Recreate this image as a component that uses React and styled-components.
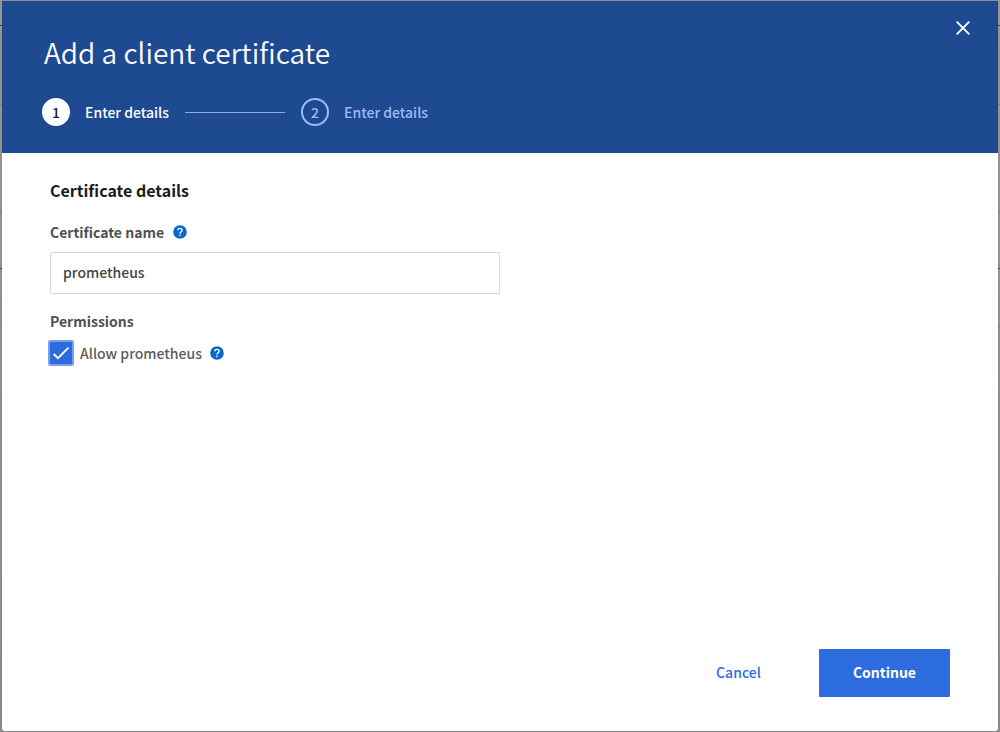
import React from "react";
import styled, { createGlobalStyle } from "styled-components";

const GlobalStyle = createGlobalStyle`
  *, *::before, *::after { box-sizing: border-box; }
  body {
    margin: 0;
    background: #999;
    color: #505050;
    font-family: "Source Sans Pro", "Noto Sans CJK SC", "Noto Sans", sans-serif;
    font-size: 14px;
    line-height: 20px;
  }
  button, input { font: inherit; }
`;

const Screen = styled.div`
  display: grid;
  min-height: 100vh;
  background: linear-gradient(#9d9c98, #8f8f8f);
`;

const Underlay = styled.div`
  grid-area: 1 / 1;
`;

const UnderlayRow = styled.div`
  height: ${(p) => p.$height}px;
  border-bottom: 1px solid ${(p) => (p.$strong ? "#484848" : "#808080")};
`;

const Dialog = styled.section`
  grid-area: 1 / 1;
  z-index: 1;
  display: flex;
  flex-direction: column;
  margin: 1px 2px;
  border-radius: 0 0 3px 3px;
  background: #fff;
  box-shadow: 0 0 2px rgba(0, 0, 0, 0.3);
`;

const Header = styled.header`
  display: flex;
  justify-content: space-between;
  align-items: flex-start;
  height: 152px;
  padding: 16px 24px 0 40px;
  background: #1e4a92;
  color: #fff;
`;

const Title = styled.h1`
  margin: 15px 0 26px 2px;
  font-size: 28px;
  font-weight: 350;
  line-height: 40px;
`;

const Steps = styled.ol`
  display: flex;
  align-items: center;
  margin: 0;
  padding: 0;
  list-style: none;
`;

const Step = styled.li`
  display: flex;
  align-items: center;
  color: ${(p) => (p.$current ? "#fff" : "#9dbcf4")};
  font-weight: 500;

  li + &::before {
    content: "";
    width: 100px;
    height: 1px;
    margin: 0 16px;
    background: #8eade4;
  }
`;

const StepNumber = styled.span`
  display: grid;
  place-items: center;
  width: 28px;
  height: 28px;
  margin-right: 15px;
  border: 2px solid ${(p) => (p.$current ? "#fff" : "#9dbcf4")};
  border-radius: 50%;
  background: ${(p) => (p.$current ? "#fff" : "transparent")};
  color: ${(p) => (p.$current ? "#222" : "inherit")};
`;

const CloseButton = styled.button`
  display: grid;
  place-items: center;
  width: 22px;
  height: 22px;
  padding: 0;
  border: 0;
  background: none;
  color: #fff;
  cursor: pointer;
`;

const Body = styled.form`
  flex: 1;
  display: flex;
  flex-direction: column;
  padding: 27px 48px 34px;
`;

const SectionTitle = styled.h2`
  margin: 0 0 22px;
  color: #1b1b1b;
  font-size: 16px;
  font-weight: 700;
  line-height: 20px;
`;

const LabelRow = styled.div`
  display: flex;
  align-items: center;
  gap: 9px;
  margin-bottom: 10px;
  font-weight: 700;
`;

const TextInput = styled.input`
  width: 450px;
  max-width: 100%;
  height: 42px;
  padding: 0 12px 2px;
  border: 1px solid #d8d8d8;
  border-radius: 1px;
  background: #fff;
  color: #444;
  font-weight: 500;
  outline: none;
`;

const Permissions = styled.fieldset`
  min-width: 0;
  margin: 17px 0 0;
  padding: 0;
  border: 0;
`;

const Legend = styled.legend`
  padding: 0;
  margin-bottom: 11px;
  font-weight: 700;
`;

const CheckRow = styled.div`
  display: flex;
  align-items: center;
  gap: 8px;
`;

const CheckLabel = styled.label`
  display: flex;
  align-items: center;
  gap: 8px;
  color: #5c5c5c;
  font-weight: 500;
`;

const Tick = styled.span`
  display: grid;
  width: 22px;
  height: 22px;

  & > * { grid-area: 1 / 1; }
  svg { z-index: 1; pointer-events: none; }
`;

const Checkbox = styled.input`
  appearance: none;
  width: 22px;
  height: 22px;
  margin: 0;
  border-radius: 1px;
  background: #2d6cdf;
  box-shadow: 0 0 0 2px #76a0ee;
  outline: none;
  & + svg { visibility: hidden; }
  &:checked + svg { visibility: visible; }
`;

const HelpButton = styled.button`
  display: grid;
  width: 14px;
  height: 14px;
  padding: 0;
  border: 0;
  background: none;
  cursor: pointer;
`;

const Actions = styled.footer`
  display: flex;
  justify-content: flex-end;
  align-items: center;
  gap: 32px;
  margin-top: auto;
`;

const Button = styled.button`
  height: 48px;
  padding: 0 ${(p) => (p.$primary ? 34 : 26)}px 2px;
  border: 0;
  border-radius: 1px;
  background: ${(p) => (p.$primary ? "#2d6cdf" : "none")};
  color: ${(p) => (p.$primary ? "#fff" : "#2d6cdf")};
  font-weight: ${(p) => (p.$primary ? 700 : 500)};
  cursor: pointer;
`;

function Help({ label }) {
  return (
    <HelpButton type="button" aria-label={label}>
      <svg width="14" height="14" viewBox="0 0 14 14" aria-hidden="true">
        <circle cx="7" cy="7" r="6.8" fill="#0868ca" />
        <path d="M4.9 5.3C4.9 2.7 9.1 2.7 9.1 5.2C9.1 6.8 7 6.8 7 8.7" fill="none" stroke="#fff" strokeWidth="1.4" />
        <rect x="6.3" y="9.7" width="1.4" height="1.4" fill="#fff" />
      </svg>
    </HelpButton>
  );
}

const underlayRows = [
  { height: 26, strong: true },
  { height: 79 },
  { height: 107 },
  { height: 57, strong: true },
  { height: 58 },
];

const steps = ["Enter details", "Enter details"];

export default function App() {
  return (
    <>
      <GlobalStyle />
      <Screen>
        <Underlay aria-hidden="true">
          {underlayRows.map((row, i) => (
            <UnderlayRow key={i} $height={row.height} $strong={row.strong} />
          ))}
        </Underlay>
        <Dialog role="dialog" aria-labelledby="dialog-title">
          <Header>
            <div>
              <Title id="dialog-title">Add a client certificate</Title>
              <Steps>
                {steps.map((name, i) => (
                  <Step key={i} $current={i === 0} aria-current={i === 0 ? "step" : undefined}>
                    <StepNumber $current={i === 0}>{i + 1}</StepNumber>
                    {name}
                  </Step>
                ))}
              </Steps>
            </div>
            <CloseButton type="button" aria-label="Close">
              <svg width="14" height="14" viewBox="0 0 14 14" aria-hidden="true">
                <path d="M.7.7 13.3 13.3M13.3.7.7 13.3" stroke="currentColor" strokeWidth="1.9" />
              </svg>
            </CloseButton>
          </Header>
          <Body onSubmit={(e) => e.preventDefault()}>
            <SectionTitle>Certificate details</SectionTitle>
            <LabelRow>
              <label htmlFor="certificate-name">Certificate name</label>
              <Help label="About the certificate name" />
            </LabelRow>
            <TextInput id="certificate-name" type="text" defaultValue="prometheus" />
            <Permissions>
              <Legend>Permissions</Legend>
              <CheckRow>
                <CheckLabel>
                  <Tick>
                    <Checkbox type="checkbox" defaultChecked />
                    <svg width="22" height="22" viewBox="0 0 22 22" aria-hidden="true">
                      <path d="M3.7 12 8 16.2 18.5 5.7" fill="none" stroke="#fff" strokeWidth="1.9" />
                    </svg>
                  </Tick>
                  Allow prometheus
                </CheckLabel>
                <Help label="About Prometheus access" />
              </CheckRow>
            </Permissions>
            <Actions>
              <Button type="button">Cancel</Button>
              <Button type="submit" $primary>Continue</Button>
            </Actions>
          </Body>
        </Dialog>
      </Screen>
    </>
  );
}
